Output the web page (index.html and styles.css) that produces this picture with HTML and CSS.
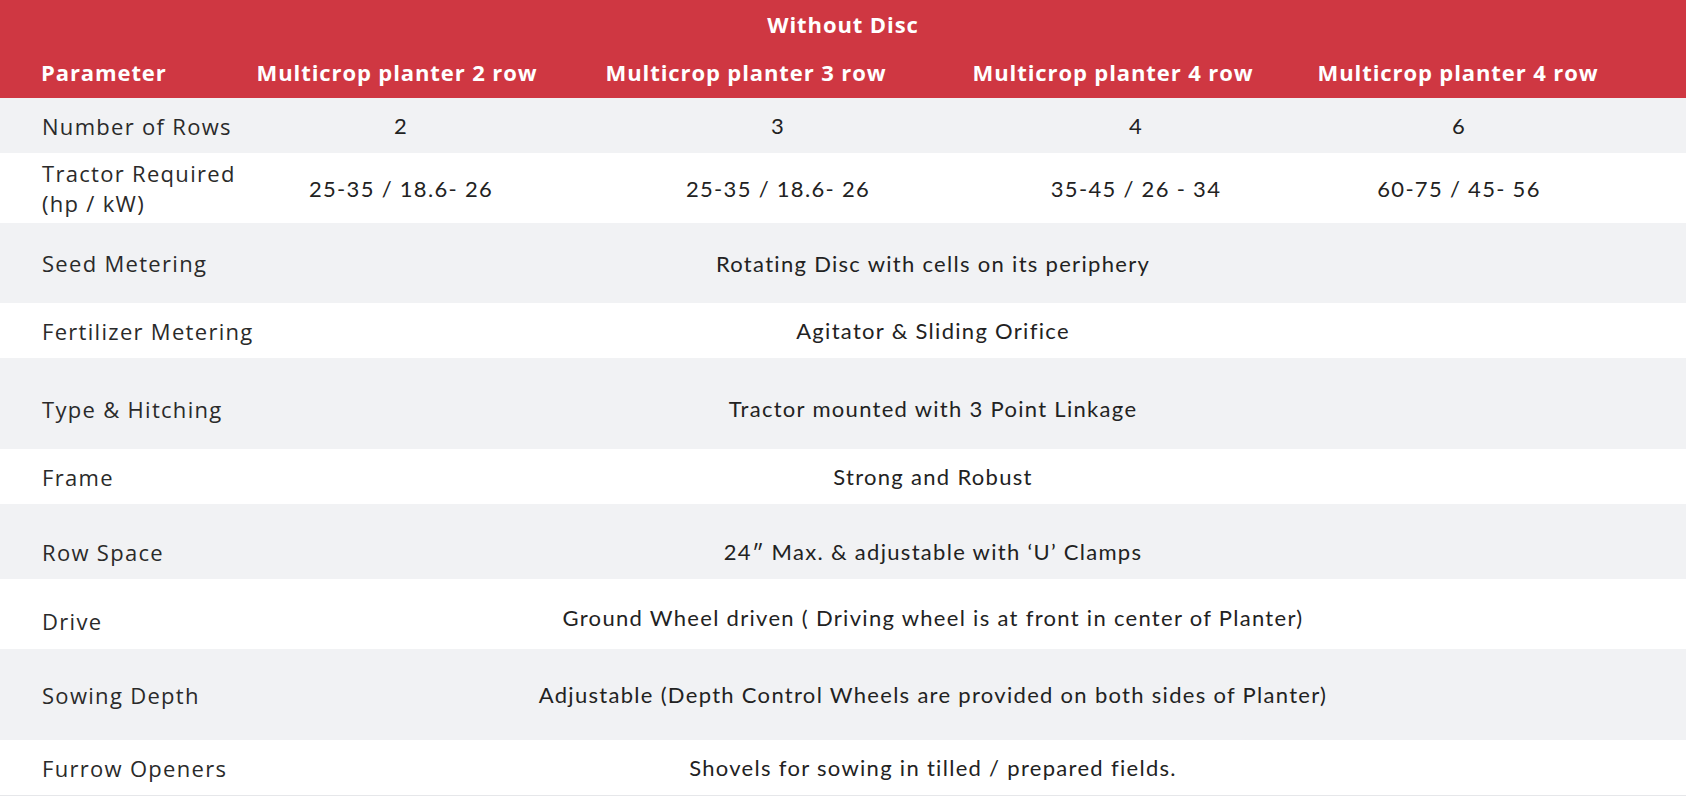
FILE: index.html
```html
<!DOCTYPE html>
<html lang="en">
<head>
<meta charset="utf-8">
<title>Multicrop Planter Specifications</title>
<link rel="stylesheet" href="styles.css">
</head>
<body>
<div class="spec">
  <div class="head">
    <div class="title">Without Disc</div>
    <div class="head-row">
      <div class="hcell first">Parameter</div>
      <div class="hcell">Multicrop planter 2 row</div>
      <div class="hcell">Multicrop planter 3 row</div>
      <div class="hcell">Multicrop planter 4 row</div>
      <div class="hcell">Multicrop planter 4 row</div>
    </div>
  </div>

  <div class="row alt">
    <div class="label">Number of Rows</div>
    <div class="val">2</div>
    <div class="val">3</div>
    <div class="val">4</div>
    <div class="val">6</div>
  </div>
  <div class="row h70">
    <div class="label">Tractor Required<br>(hp / kW)</div>
    <div class="val">25-35 / 18.6- 26</div>
    <div class="val">25-35 / 18.6- 26</div>
    <div class="val">35-45 / 26 - 34</div>
    <div class="val">60-75 / 45- 56</div>
  </div>
  <div class="row alt h80">
    <div class="label">Seed Metering</div>
    <div class="val span">Rotating Disc with cells on its periphery</div>
  </div>
  <div class="row">
    <div class="label">Fertilizer Metering</div>
    <div class="val span">Agitator &amp; Sliding Orifice</div>
  </div>
  <div class="row alt h91 low5">
    <div class="label">Type &amp; Hitching</div>
    <div class="val span">Tractor mounted with 3 Point Linkage</div>
  </div>
  <div class="row">
    <div class="label">Frame</div>
    <div class="val span">Strong and Robust</div>
  </div>
  <div class="row alt h75 low10">
    <div class="label">Row Space</div>
    <div class="val span">24″ Max. &amp; adjustable with ‘U’ Clamps</div>
  </div>
  <div class="row h70 low4">
    <div class="label nudge">Drive</div>
    <div class="val span">Ground Wheel driven ( Driving wheel is at front in center of Planter)</div>
  </div>
  <div class="row alt h91">
    <div class="label">Sowing Depth</div>
    <div class="val span">Adjustable (Depth Control Wheels are provided on both sides of Planter)</div>
  </div>
  <div class="row last">
    <div class="label">Furrow Openers</div>
    <div class="val span">Shovels for sowing in tilled / prepared fields.</div>
  </div>
</div>
</body>
</html>
```

FILE: styles.css
```css
* { box-sizing: border-box; }

html, body {
  margin: 0;
  padding: 0;
  background: #ffffff;
}

.spec {
  width: 1686px;
  color: #262626;
}

.head {
  background: #cf3742;
  color: #ffffff;
  height: 98px;
  font-family: "Open Sans", "Noto Sans", sans-serif;
  font-weight: 700;
  font-size: 22px;
  letter-spacing: 0.9px;
}

.title {
  height: 48px;
  display: flex;
  align-items: center;
  justify-content: center;
}

.head-row {
  height: 50px;
  display: grid;
  grid-template-columns: 298px 198px 500px 234px 456px;
  align-items: center;
  padding-bottom: 3px;
}

.hcell {
  display: flex;
  justify-content: center;
  white-space: nowrap;
  min-width: 0;
}

.hcell.first {
  justify-content: flex-start;
  padding-left: 41px;
}

.row {
  display: grid;
  grid-template-columns: 286px 230px 524px 192px 454px;
  align-items: center;
  min-height: 55px;
}

.row.alt { background: #f1f2f4; }
.row.h70 { min-height: 70px; }
.row.h75 { min-height: 75px; }
.row.h80 { min-height: 80px; }
.row.h91 { min-height: 91px; }
.row.low4 { padding-top: 6px; }
.row.low5 { padding-top: 10px; }
.row.low10 { padding-top: 20px; }
.row.last { border-bottom: 1px solid #e6e7ea; min-height: 56px; }

.label {
  padding-left: 42px;
  font-family: "Open Sans", "Noto Sans", sans-serif;
  font-size: 22px;
  letter-spacing: 1.3px;
  line-height: 30px;
  white-space: nowrap;
  color: #2a2a2a;
}

.label.nudge { padding-top: 7px; }

.val {
  display: flex;
  justify-content: center;
  white-space: nowrap;
  min-width: 0;
  font-family: "Lato", "Noto Sans", sans-serif;
  font-size: 22px;
  letter-spacing: 1.3px;
  color: #222222;
}

.val.span {
  grid-column: 2 / -1;
  padding-right: 106px;
}
```
